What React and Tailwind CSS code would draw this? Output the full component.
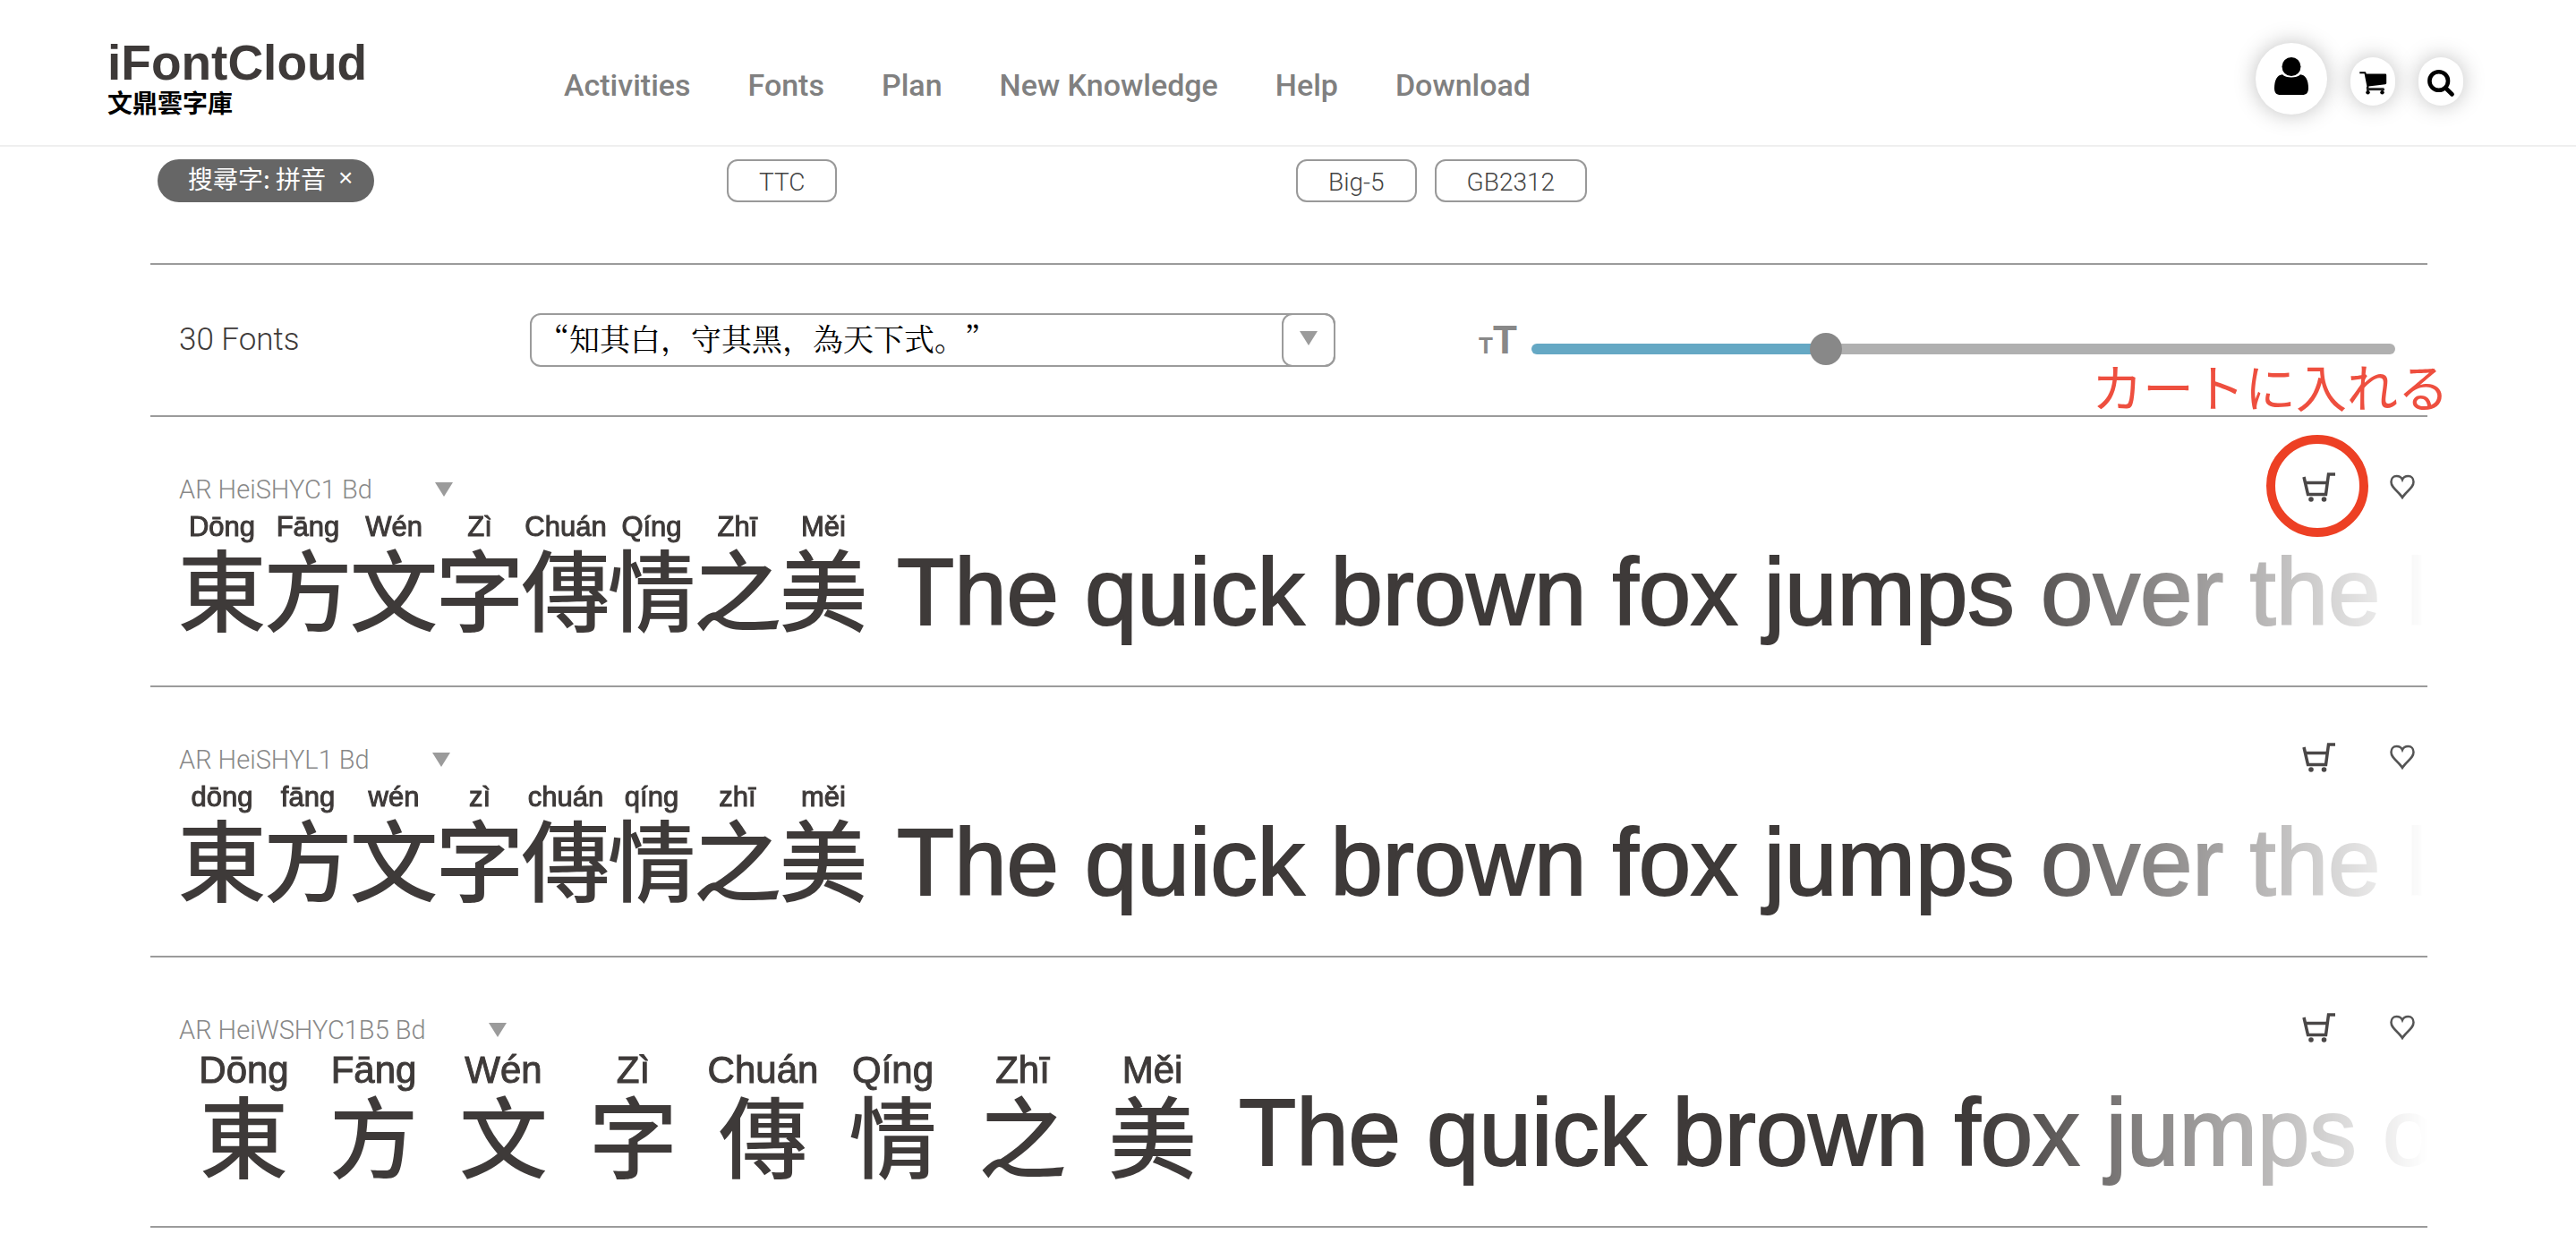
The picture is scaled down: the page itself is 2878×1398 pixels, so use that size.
const NAV = ["Activities", "Fonts", "Plan", "New Knowledge", "Help", "Download"];

const HAN = ["東", "方", "文", "字", "傳", "情", "之", "美"];
const UPPER = ["Dōng", "Fāng", "Wén", "Zì", "Chuán", "Qíng", "Zhī", "Měi"];
const LOWER = UPPER.map((s) => s.toLowerCase());

const FONTS = [
  { name: "AR HeiSHYC1 Bd", pinyin: UPPER, wide: false, marked: true },
  { name: "AR HeiSHYL1 Bd", pinyin: LOWER, wide: false },
  { name: "AR HeiWSHYC1B5 Bd", pinyin: UPPER, wide: true },
];

function Triangle() {
  return (
    <svg viewBox="0 0 20 16" className="h-4 w-5" aria-hidden="true">
      <path d="M0 0H20L10 16Z" fill="#9b9b9b" />
    </svg>
  );
}

function UserIcon() {
  return (
    <svg viewBox="0 0 80 80" className="size-20" aria-hidden="true">
      <circle cx="40" cy="26.500" r="10.500" />
      <path d="M30 35.200C34 39.500 46 39.500 50 35.200C56 35.500 59 42 59 50.500C59 55.500 57 58 52 58H28C23 58 21 55.500 21 50.500C21 42 24 35.500 30 35.200Z" />
    </svg>
  );
}

function CartSolid() {
  return (
    <svg viewBox="0 0 50 54" className="h-[54px] w-[50px]" aria-hidden="true">
      <path d="M10.300 16.200H16.300Q17.200 16.200 17.400 17.200L17.700 18.500H39Q40.200 18.500 40.200 19.700V29Q40.200 30 39 30.200L20.400 32.400V34.300H37.500V35.600H18.500Q17.600 35.600 17.800 34L18.400 32.500L15.600 18.300H10.300Z" />
      <path d="M18 35.500H38V37H18Z" />
      <circle cx="19.500" cy="39.200" r="2.200" />
      <circle cx="35.500" cy="39.200" r="2.200" />
    </svg>
  );
}

function SearchIcon() {
  return (
    <svg viewBox="0 0 50 54" className="h-[54px] w-[50px]" fill="none" stroke="#000" aria-hidden="true">
      <circle cx="22.700" cy="26.500" r="10.300" strokeWidth="4.600" />
      <path d="M30.500 34.500L37.600 41.500" strokeWidth="4.600" strokeLinecap="round" />
    </svg>
  );
}

function CartOutline() {
  return (
    <svg viewBox="0 0 38 34" className="h-[34px] w-[38px]" fill="none" stroke="#4a4747" aria-hidden="true">
      <path d="M2 6L6.500 25.500H26.500L29.500 3H37" strokeWidth="3.500" />
      <path d="M4 12.500H28" strokeWidth="3.500" />
      <circle cx="10" cy="31" r="2.800" fill="#4a4747" stroke="none" />
      <circle cx="24.500" cy="31" r="2.800" fill="#4a4747" stroke="none" />
    </svg>
  );
}

function HeartOutline() {
  return (
    <svg viewBox="0 0 28 28" className="size-7" fill="none" stroke="#555" strokeWidth="2.500" aria-hidden="true">
      <path d="M14 26C12.500 23.500 10.500 21.500 8 19C4 15 1.500 12.500 1.500 8.500C1.500 4.500 4 2 7.500 2C10.500 2 13 3.500 14 6C15 3.500 17.500 2 20.500 2C24 2 26.500 4.500 26.500 8.500C26.500 12.500 24 15 20 19C17.500 21.500 15.500 23.500 14 26Z" />
    </svg>
  );
}

function Header() {
  return (
    <header className="flex h-[164px] items-start border-b-2 border-[#efefef] pr-[126px] pl-[120px]">
      <a href="#home" className="mt-[42px] block w-[510px] shrink-0">
        <span className="block font-['Liberation_Sans'] text-[55px] leading-[56px] font-bold text-[#3e3a39]">iFontCloud</span>
        <span className="block font-['Noto_Sans_CJK_TC',sans-serif] text-[28px] leading-8 font-bold text-black">文鼎雲字庫</span>
      </a>
      <nav className="mt-[75px] flex gap-16 font-[Roboto] text-[34px] leading-10 font-medium text-[#808080]">
        {NAV.map((n) => (
          <a key={n} href={"#" + n.toLowerCase().replace(" ", "-")} className="whitespace-nowrap">{n}</a>
        ))}
      </nav>
      <div className="mt-12 ml-auto flex items-center gap-[26px]">
        <button aria-label="Account" className="rounded-full bg-white shadow-[0_0_24px_rgba(0,0,0,0.25)]">
          <UserIcon />
        </button>
        <button aria-label="Cart" className="mt-1.5 rounded-full bg-white shadow-[0_0_24px_rgba(0,0,0,0.25)]">
          <CartSolid />
        </button>
        <button aria-label="Search" className="mt-1.5 rounded-full bg-white shadow-[0_0_24px_rgba(0,0,0,0.25)]">
          <SearchIcon />
        </button>
      </div>
    </header>
  );
}

function Chip({ children }) {
  return (
    <button className="h-12 rounded-xl border-2 border-[#999] px-[34px] pt-1 font-[Roboto] text-[28px] leading-10 font-light text-[#444]">{children}</button>
  );
}

function Filters() {
  return (
    <section className="grid h-[132px] grid-cols-4 items-start border-b-2 border-[#9b9b9b] pt-3.5">
      <div className="pl-2">
        <button className="flex h-12 items-center gap-3.5 rounded-full bg-[#666] pr-6 pb-1.5 pl-[34px] font-['Noto_Sans_CJK_TC',sans-serif] text-[28px] leading-10 text-white">
          <span>搜尋字: 拼音</span>
          <span className="font-['Liberation_Sans'] text-[28px]">×</span>
        </button>
      </div>
      <div className="pl-2"><Chip>TTC</Chip></div>
      <div className="flex gap-5 pl-2"><Chip>Big-5</Chip><Chip>GB2312</Chip></div>
    </section>
  );
}

function Toolbar() {
  return (
    <section className="flex h-[170px] items-center border-b-2 border-[#9b9b9b] pr-9 pl-8">
      <p className="w-[392px] font-[Roboto] text-[35px] font-light text-[#3e3a39]">30 Fonts</p>
      <div className="flex h-[60px] w-[900px] rounded-xl border-2 border-[#9b9b9b]">
        <input
          aria-label="Sample text"
          defaultValue="“知其白，守其黑，為天下式。”"
          className="min-w-0 flex-1 pr-2 pb-1 pl-2 font-['Noto_Serif_CJK_SC','Noto_Sans_CJK_SC',serif] text-[34px] leading-10 text-black outline-none [text-spacing-trim:space-all]"
        />
        <button aria-label="Choose sample" className="-my-0.5 -mr-0.5 flex w-[60px] justify-center rounded-xl border-2 border-[#9b9b9b] pt-[18px]">
          <Triangle />
        </button>
      </div>
      <div className="ml-40 flex flex-1 items-center gap-4">
        <span className="flex items-baseline pt-1.5 font-['Liberation_Sans'] text-[44px] leading-10 font-bold text-[#888]">
          <span className="text-[26px]">T</span>T
        </span>
        <input
          type="range"
          aria-label="Font size"
          step="0.5"
          defaultValue="33.5"
          className="mt-5 h-3 flex-1 appearance-none rounded-full bg-[linear-gradient(to_right,#65a8c4_34%,#b0b0b0_34%)] [&::-webkit-slider-thumb]:size-9 [&::-webkit-slider-thumb]:appearance-none [&::-webkit-slider-thumb]:rounded-full [&::-webkit-slider-thumb]:bg-[#888]"
        />
      </div>
    </section>
  );
}

function Glyph({ han, pinyin, wide }) {
  return (
    <div className={wide ? "w-[145px] shrink-0" : "w-24 shrink-0"}>
      <div
        className={
          wide
            ? "flex h-[47px] justify-center pt-1 font-['Liberation_Sans'] text-[42px] leading-[42px] [-webkit-text-stroke:1px_#3e3a39]"
            : "flex h-10 justify-center pt-1 font-['Liberation_Sans'] text-[31px] leading-9 [-webkit-text-stroke:1px_#3e3a39]"
        }
      >
        {pinyin}
      </div>
      <div className="flex justify-center font-['Noto_Sans_CJK_TC',sans-serif] text-[99px] leading-[96px] font-medium">{han}</div>
    </div>
  );
}

function FontRow({ name, pinyin, wide, marked }) {
  return (
    <li className="relative h-[302px] border-b-2 border-[#9b9b9b] pl-8">
      <div className="flex items-center pt-[61px] pr-3.5">
        <button className="flex items-center gap-[70px] font-[Roboto] text-[29px] leading-10 font-light text-[#888]">
          {name}
          <Triangle />
        </button>
        <div className="ml-auto flex items-center gap-[60px] pb-1.5">
          <button aria-label="Add to cart"><CartOutline /></button>
          <button aria-label="Add to favourites"><HeartOutline /></button>
        </div>
      </div>
      <div className="flex overflow-hidden pb-8 whitespace-nowrap text-[#3e3a39] [mask-image:linear-gradient(to_right,black_80%,transparent)]">
        {HAN.map((h, i) => (
          <Glyph key={h} han={h} pinyin={pinyin[i]} wide={wide} />
        ))}
        <p className={`shrink-0 pt-10 font-['Liberation_Sans'] text-[105px] leading-[110px] [-webkit-text-stroke:2px_#3e3a39] ${wide ? "pl-6" : "pl-[34px]"}`}>
          The quick brown fox jumps over the lazy dog
        </p>
      </div>
      {marked && (
        <>
          <span className="absolute -top-[68px] -right-6 font-['Noto_Sans_CJK_JP',sans-serif] text-[57px] leading-[64px] text-[#ee4f3f]">カートに入れる</span>
          <span className="pointer-events-none absolute top-5 right-[66px] size-[114px] rounded-full border-[10px] border-[#ed4024]" />
        </>
      )}
    </li>
  );
}

export default function App() {
  return (
    <div className="min-h-screen overflow-hidden bg-white">
      <Header />
      <main className="mr-[166px] ml-[168px]">
        <Filters />
        <Toolbar />
        <ul>
          {FONTS.map((f) => (
            <FontRow key={f.name} {...f} />
          ))}
        </ul>
      </main>
    </div>
  );
}
